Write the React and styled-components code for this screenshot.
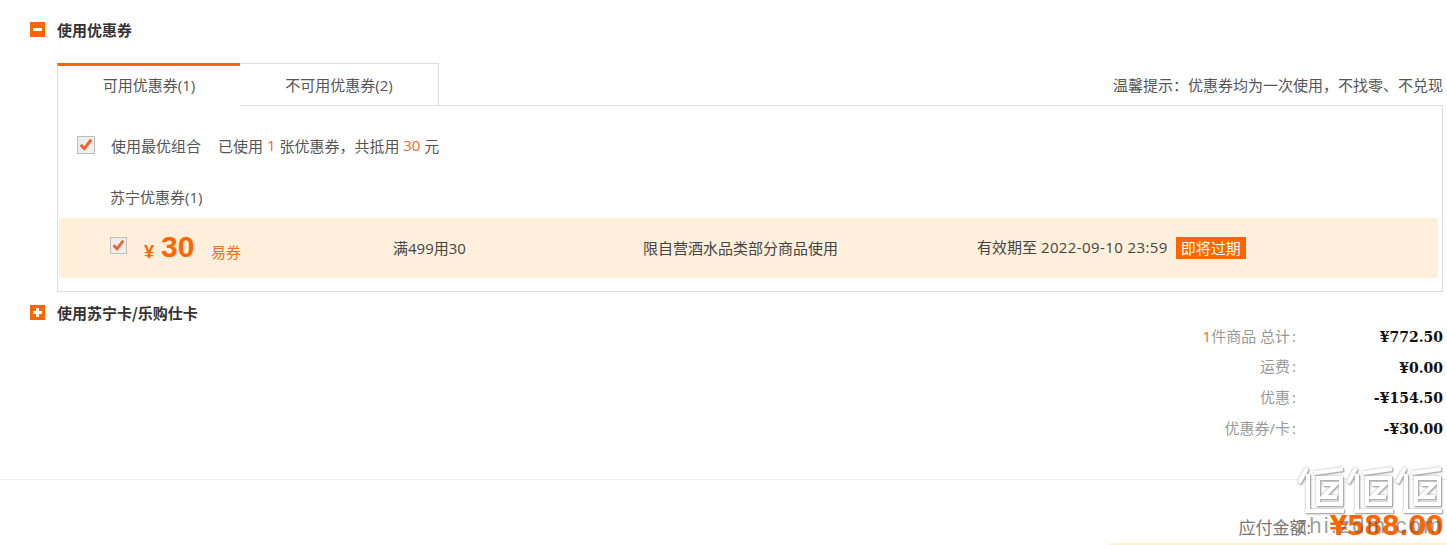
import React from "react";
import styled, { createGlobalStyle } from "styled-components";

const Global = createGlobalStyle`
  html, body { margin: 0; padding: 0; background: #fff; }
  body { font-family: "Open Sans", "Noto Sans CJK SC", sans-serif; color: #333; }
`;
const Page = styled.div`
  position: relative;
  width: 1447px;
  height: 545px;
  overflow: hidden;
  background: #fff;
`;
const Section = styled.section`
  padding: ${(p) => p.$pad};
`;
const Head = styled.div`
  display: flex;
  align-items: center;
  height: 15px;
  line-height: 15px;
  gap: 12px;
  font-family: "Noto Sans CJK SC", sans-serif;
  font-size: 15px;
  font-weight: 700;
  color: #333;
`;
const Toggle = styled.span`
  position: relative;
  width: 15px;
  height: 15px;
  background: #ff6600;
  flex: none;
  &::before {
    content: "";
    position: absolute;
    left: 3px;
    top: 6px;
    width: 9px;
    height: 3px;
    background: #fff;
  }
  ${(p) =>
    p.$plus &&
    `&::after { content: ""; position: absolute; left: 6px; top: 3px; width: 3px; height: 9px; background: #fff; }`}
`;
const TabRow = styled.div`
  display: flex;
  align-items: flex-end;
  justify-content: space-between;
  margin: 26px 4px 0 57px;
  height: 43px;
`;
const Tabs = styled.div`
  display: flex;
  height: 43px;
`;
const Tab = styled.div`
  box-sizing: border-box;
  width: ${(p) => p.$w}px;
  height: 43px;
  display: flex;
  align-items: center;
  justify-content: center;
  font-size: 15px;
  color: #555;
  background: #fff;
  border: 1px solid #ddd;
  border-left-width: ${(p) => (p.$active ? 1 : 0)}px;
  border-top: ${(p) => (p.$active ? "3px solid #ff6600" : "1px solid #ddd")};
  border-bottom: ${(p) => (p.$active ? "1px solid #fff" : "1px solid #ddd")};
  border-right-width: ${(p) => (p.$active ? 0 : 1)}px;
  padding-bottom: ${(p) => (p.$active ? 2 : 0)}px;
  position: relative;
  z-index: 1;
`;
const Tip = styled.div`
  font-size: 15px;
  line-height: 20px;
  color: #555;
  padding-bottom: 11px;
`;
const Panel = styled.div`
  box-sizing: border-box;
  margin: -1px 4px 0 57px;
  height: 187px;
  border: 1px solid #ddd;
  padding: 30px 4px 0 1px;
`;
const ComboRow = styled.div`
  display: flex;
  align-items: center;
  height: 18px;
  padding-left: 18px;
  font-size: 15px;
  color: #555;
`;
const Check = styled.span`
  box-sizing: border-box;
  display: block;
  width: ${(p) => p.$s}px;
  height: ${(p) => p.$s}px;
  flex: none;
  border: 1px solid #bdbdbd;
  background: #eee;
  svg { display: block; width: 100%; height: 100%; }
`;
const ComboLabel = styled.span`
  margin-left: 16px;
  margin-right: 17px;
`;
const Mark = styled.span`
  color: #f1683a;
`;
const Group = styled.div`
  margin: 33px 0 0 51px;
  height: 20px;
  line-height: 20px;
  font-size: 15px;
  color: #555;
`;
const CouponRow = styled.div`
  box-sizing: border-box;
  display: flex;
  align-items: center;
  height: 60px;
  margin-top: 11px;
  padding-bottom: 2px;
  background: #ffefdb;
  font-size: 15px;
  color: #444;
`;
const CouponCheck = styled.div`
  width: 85px;
  padding: 0 0 0 51px;
  box-sizing: border-box;
  margin-top: -3px;
`;
const Amount = styled.div`
  display: flex;
  align-items: baseline;
  width: 249px;
  margin-top: 2px;
  color: #ff6600;
  font-family: "Liberation Sans", sans-serif;
`;
const Yen = styled.span`
  font-size: 18px;
  font-weight: 700;
  width: 17px;
`;
const Big = styled.span`
  font-size: 30px;
  font-weight: 700;
  width: 50px;
  transform: translateY(-1px);
`;
const Kind = styled.span`
  font-family: "Noto Sans CJK SC", sans-serif;
  font-size: 15px;
  color: #f0701f;
`;
const Cell = styled.div`
  width: ${(p) => p.$w}px;
  flex: none;
`;
const DateText = styled.span`
  letter-spacing: 0.4px;
`;
const Badge = styled.span`
  display: inline-block;
  margin-left: 8px;
  padding: 0 5px;
  height: 22px;
  line-height: 22px;
  font-size: 15px;
  color: #fff;
  background: #ff6600;
  transform: translateY(1px);
`;
const Summary = styled.div`
  margin: 0 4px 0 0;
`;
const SumRow = styled.div`
  display: flex;
  justify-content: flex-end;
  align-items: center;
  height: 30.6px;
`;
const SumLabel = styled.span`
  font-size: 15px;
  color: #999;
`;
const Colon = styled.span`
  margin-left: 2px;
`;
const SumValue = styled.span`
  width: 147px;
  padding-top: 4px;
  text-align: right;
  font-family: "DejaVu Serif", serif;
  font-size: 14px;
  font-weight: 700;
  color: #111;
`;
const Divider = styled.hr`
  border: 0;
  border-top: 1px solid #eee;
  margin: 37px 0 0;
`;
const Payable = styled.div`
  display: flex;
  justify-content: flex-end;
  align-items: baseline;
  margin: 30px 4px 0 0;
  height: 36px;
`;
const PayLabel = styled.span`
  font-size: 17px;
  color: #777;
  margin-right: 2px;
  width: 89px;
`;
const PayValue = styled.span`
  font-family: "DejaVu Sans", sans-serif;
  font-size: 26px;
  font-weight: 700;
  color: #ff6600;
  letter-spacing: -0.7px;
  transform: translateY(1px);
`;
const Stripe = styled.div`
  position: absolute;
  left: 1110px;
  right: 0;
  bottom: 0;
  height: 2px;
  background: #fff3cf;
`;
const Watermark = styled.div`
  position: absolute;
  left: 1297px;
  top: 466px;
  pointer-events: none;
  filter: drop-shadow(1px 1px 0 #b0b0b0) drop-shadow(0 0 1px rgba(0, 0, 0, 0.35));
  svg { display: block; }
`;
const WatermarkUrl = styled.span`
  position: absolute;
  left: 1296px;
  top: 513px;
  font-family: "Liberation Sans", sans-serif;
  font-size: 22px;
  letter-spacing: 2.2px;
  color: rgba(90, 90, 90, 0.6);
  white-space: nowrap;
`;

const Tick = () => (
  <svg viewBox="0 0 18 18">
    <path d="M3 8.8 L7.2 13 L14.8 3" fill="none" stroke="#f4622a" strokeWidth="3.4" />
  </svg>
);

const Glyph = ({ x }) => (
  <g transform={`translate(${x} 0)`} fill="none" stroke="#fff" strokeWidth="4">
    <path d="M10 2 L2 17 M11 8 V44" />
    <path d="M17 7 L46 3 M21 12 H44 V38 H21 Z" />
    <path d="M26 18 H39 L26 31 H40" />
    <path d="M8 45 H47" />
  </g>
);

export default function App() {
  return (
    <Page>
      <Global />
      <Section $pad="22px 0 0 30px">
        <Head>
          <Toggle />
          使用优惠券
        </Head>
      </Section>
      <TabRow>
        <Tabs>
          <Tab $active $w={183}>可用优惠券(1)</Tab>
          <Tab $w={199}>不可用优惠券(2)</Tab>
        </Tabs>
        <Tip>温馨提示：优惠券均为一次使用，不找零、不兑现</Tip>
      </TabRow>
      <Panel>
        <ComboRow>
          <Check $s={18}><Tick /></Check>
          <ComboLabel>使用最优组合</ComboLabel>
          已使用&nbsp;<Mark>1</Mark>&nbsp;张优惠券，共抵用&nbsp;<Mark>30</Mark>&nbsp;元
        </ComboRow>
        <Group>苏宁优惠券(1)</Group>
        <CouponRow>
          <CouponCheck><Check $s={17}><Tick /></Check></CouponCheck>
          <Amount>
            <Yen>¥</Yen>
            <Big>30</Big>
            <Kind>易券</Kind>
          </Amount>
          <Cell $w={250}>满499用30</Cell>
          <Cell $w={334}>限自营酒水品类部分商品使用</Cell>
          <Cell $w={290}>有效期至 <DateText>2022-09-10 23:59</DateText><Badge>即将过期</Badge></Cell>
        </CouponRow>
      </Panel>
      <Section $pad="13px 0 0 30px">
        <Head>
          <Toggle $plus />
          使用苏宁卡/乐购仕卡
        </Head>
      </Section>
      <Summary>
        <SumRow><SumLabel><Mark>1</Mark>件商品 总计<Colon>:</Colon></SumLabel><SumValue>¥772.50</SumValue></SumRow>
        <SumRow><SumLabel>运费<Colon>:</Colon></SumLabel><SumValue>¥0.00</SumValue></SumRow>
        <SumRow><SumLabel>优惠<Colon>:</Colon></SumLabel><SumValue>-¥154.50</SumValue></SumRow>
        <SumRow><SumLabel>优惠券/卡<Colon>:</Colon></SumLabel><SumValue>-¥30.00</SumValue></SumRow>
      </Summary>
      <Divider />
      <Payable>
        <PayLabel>应付金额:</PayLabel>
        <PayValue>¥588.00</PayValue>
      </Payable>
      <Stripe />
      <WatermarkUrl>zhi.zdm.com</WatermarkUrl>
      <Watermark>
        <svg width="146" height="48" viewBox="0 0 146 48">
          <Glyph x={0} />
          <Glyph x={49} />
          <Glyph x={98} />
        </svg>
      </Watermark>
    </Page>
  );
}
